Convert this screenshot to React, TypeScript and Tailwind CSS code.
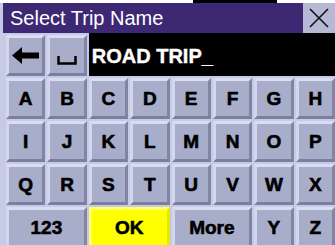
import React from "react";

const keyBase =
  "flex items-center justify-center h-[41px] border-[3px] border-t-[#d9ddf1] border-l-[#d3d7ee] border-b-[#7a7ea0] border-r-[#8084a5] text-[19px] font-bold text-black leading-none [-webkit-text-stroke:0.6px_#000]";

function Key({ label, className = "" }: { label: React.ReactNode; className?: string }) {
  return <div className={`${keyBase} bg-[#a8adca] ${className}`}>{label}</div>;
}

function BackArrow() {
  return (
    <svg width="27" height="17" viewBox="0 0 27 17">
      <path d="M0 8.5 L10 0 L10 5.5 L27 5.5 L27 11.5 L10 11.5 L10 17 Z" fill="#000" />
    </svg>
  );
}

function SpaceGlyph() {
  return (
    <svg width="20" height="9" viewBox="0 0 20 9" className="mt-[10px]">
      <path d="M1.5 0 L1.5 7.5 L18.5 7.5 L18.5 0" fill="none" stroke="#000" strokeWidth="2.5" />
    </svg>
  );
}

export default function App() {
  const rows = [
    ["A", "B", "C", "D", "E", "F", "G", "H"],
    ["I", "J", "K", "L", "M", "N", "O", "P"],
    ["Q", "R", "S", "T", "U", "V", "W", "X"],
  ];

  return (
    <div className="w-[335px] h-[245px] overflow-hidden bg-[#c6cae4] font-['Liberation_Sans',Arial,sans-serif]">
      {/* top strip */}
      <div className="flex h-[3px] bg-white">
        <div className="ml-[193px] w-[84px] bg-black" />
      </div>

      {/* title bar */}
      <div className="flex h-[30px] pl-[3px]">
        <div className="flex flex-1 items-center bg-[#3d2873] pl-[7px] text-[20px] text-white leading-none">
          Select Trip Name
        </div>
        <div className="flex w-[32px] items-center justify-center bg-[#b5b9d6]">
          <svg width="20" height="20" viewBox="0 0 20 20">
            <path d="M1 1 L19 19 M19 1 L1 19" stroke="#111" strokeWidth="1.6" />
          </svg>
        </div>
      </div>

      {/* keyboard */}
      <div className="grid grid-cols-8 gap-[2px] pl-[6px] pt-[2px]">
        <Key label={<BackArrow />} />
        <Key label={<SpaceGlyph />} />
        <div className="col-span-6 -mt-[2px] flex h-[43px] items-center bg-black pl-[3px] pt-[2px] text-[20px] font-bold text-white [-webkit-text-stroke:0.4px_#fff]">
          ROAD TRIP_
        </div>

        {rows.map((row) =>
          row.map((k) => <Key key={k} label={k} />)
        )}

        <Key label="123" className="col-span-2" />
        <div
          className={`${keyBase} col-span-2 bg-[#ffff00] border-t-[#ffff66] border-l-[#ffff66] border-b-[#e6e600] border-r-[#e6e600]`}
        >
          OK
        </div>
        <Key label="More" className="col-span-2" />
        <Key label="Y" />
        <Key label="Z" />
      </div>
    </div>
  );
}
